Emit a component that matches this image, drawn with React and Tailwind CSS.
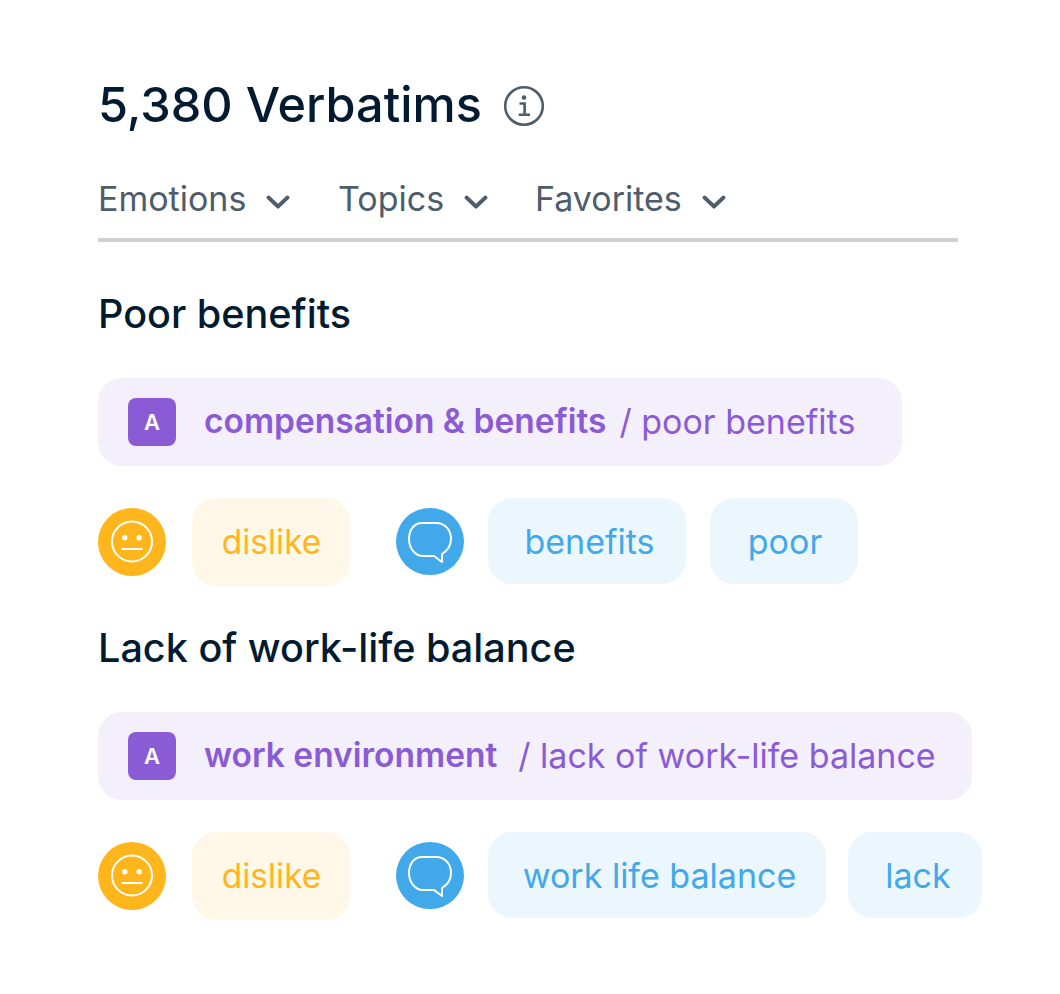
function Chevron() {
  return (
    <svg width="24" height="16" viewBox="0 0 24 16" fill="none" className="mt-[8px]">
      <path d="M2.5 3.5 L12 12.5 L21.5 3.5" stroke="#4d5d6c" strokeWidth="3.8" strokeLinecap="round" strokeLinejoin="round" />
    </svg>
  );
}

function Info() {
  return (
    <svg width="42" height="42" viewBox="0 0 42 42" fill="none">
      <circle cx="21" cy="21" r="18.8" stroke="#4d5d6c" strokeWidth="2.6" />
      <circle cx="21" cy="12.6" r="2.3" fill="#4d5d6c" />
      <path d="M16.5 18.5 H21.6 V29.5 M15.8 29.8 H27" stroke="#4d5d6c" strokeWidth="2.6" />
    </svg>
  );
}

function Neutral() {
  return (
    <div className="w-[68px] h-[68px] rounded-full bg-[#ffb61d] flex items-center justify-center shrink-0">
      <svg width="44" height="44" viewBox="0 0 44 44" fill="none">
        <circle cx="22" cy="21.5" r="20" stroke="#fff" strokeWidth="2" />
        <circle cx="14.8" cy="17.8" r="2.7" fill="#fff" />
        <circle cx="29.2" cy="17.8" r="2.7" fill="#fff" />
        <path d="M11.5 29 H32.5" stroke="#fff" strokeWidth="2" />
      </svg>
    </div>
  );
}

function Bubble() {
  return (
    <div className="w-[68px] h-[67px] mt-[10px] rounded-full bg-[#41a9e9] flex items-center justify-center shrink-0">
      <svg width="46" height="44" viewBox="0 0 46 44" fill="none" className="mt-[3px]">
        <path d="M15 2 H29 C38 2 44 9 44 18 C44 25 40 30 35 33 V41 L27 35 H16 C8 35 2 27 2 18 C2 9 7 2 15 2 Z" stroke="#fff" strokeWidth="2" strokeLinejoin="round" />
      </svg>
    </div>
  );
}

function Category({ width, bold, rest, gapClass }) {
  return (
    <div className={`${width} h-[88px] rounded-[24px] bg-[#f3effb] flex items-center pl-[30px] text-[#8b5bd6] text-[34px]`}>
      <div className="w-[48px] h-[48px] rounded-[8px] bg-[#8b5bd6] text-white text-[22px] font-semibold flex items-center justify-center shrink-0">A</div>
      <span className="ml-[28px] mb-[2px] text-[33.5px] font-semibold whitespace-nowrap">{bold}</span>
      <span className={`${gapClass} mb-[2px] whitespace-nowrap`}>{rest}</span>
    </div>
  );
}

function Row({ words, gapClass }) {
  return (
    <div className="flex items-start mt-[32px] h-[88px]">
      <div className="mt-[10px]"><Neutral /></div>
      <div className="ml-[26px] w-[158px] h-[88px] pl-[1px] rounded-[24px] bg-[#fff7e8] text-[#ffb61d] text-[33.4px] flex items-center justify-center">dislike</div>
      <div className="ml-[46px]"><Bubble /></div>
      <div className={`ml-[24px] flex ${gapClass} items-start`}>
        {words.map(([w, cls]) => (
          <div key={w} className={`${cls} h-[86px] rounded-[24px] bg-[#ebf6fd] text-[#41a9e9] text-[34px] flex items-center justify-center whitespace-nowrap`}>{w}</div>
        ))}
      </div>
    </div>
  );
}

function Menu({ label, cls }) {
  return (
    <div className={`flex items-center gap-[20px] ${cls}`}>
      <span>{label}</span>
      <Chevron />
    </div>
  );
}

export default function App() {
  return (
    <div className="w-[1060px] h-[994px] bg-white pl-[98px] pt-[73px] font-['Inter',sans-serif] overflow-hidden">
      <div className="flex items-center h-[64px] text-[#021b30] text-[48.6px] font-medium">
        <span>5,380 Verbatims</span>
        <span className="ml-[21px] mt-[1px]"><Info /></span>
      </div>
      <div className="w-[860px] h-[67px] mt-[38px] border-b-[4px] border-[#cdd0d3] flex items-start text-[#4d5d6c] text-[34px]">
        <Menu label="Emotions" cls="w-[240px] h-[46px]" />
        <Menu label="Topics" cls="w-[197px] h-[46px]" />
        <Menu label="Favorites" cls="h-[46px]" />
      </div>
      <h2 className="mt-[49px] h-[48px] flex items-center text-[39.6px] font-medium text-[#021b30]">Poor benefits</h2>
      <div className="mt-[39px]">
        <Category width="w-[804px]" bold="compensation & benefits" rest="/ poor benefits" gapClass="ml-[13px]" />
      </div>
      <Row words={[["benefits", "w-[198px] pl-[5px]"], ["poor", "w-[148px] pl-[2px]"]]} gapClass="gap-[24px]" />
      <h2 className="mt-[39px] h-[48px] flex items-center text-[39.6px] font-medium text-[#021b30]">Lack of work-life balance</h2>
      <div className="mt-[39px]">
        <Category width="w-[874px]" bold="work environment" rest="/ lack of work-life balance" gapClass="ml-[21px]" />
      </div>
      <Row words={[["work life balance", "w-[338px] pl-[5px]"], ["lack", "w-[134px] pl-[6px]"]]} gapClass="gap-[22px]" />
    </div>
  );
}
